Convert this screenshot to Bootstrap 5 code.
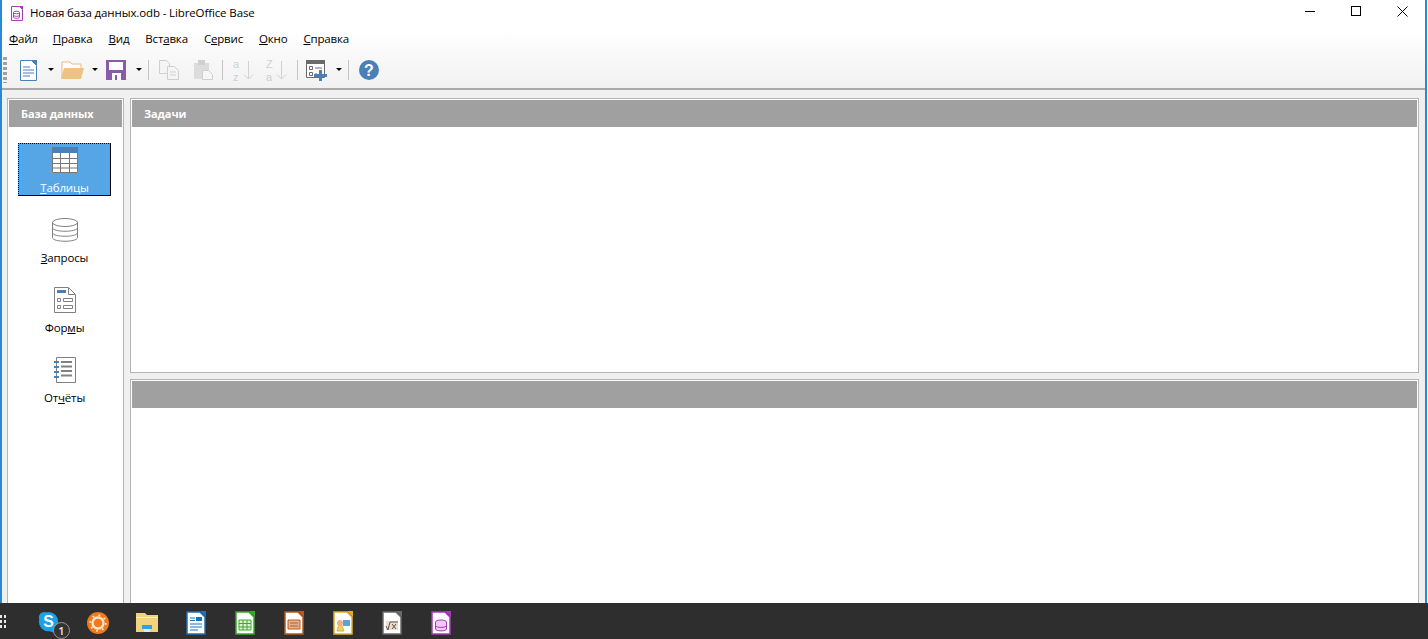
<!DOCTYPE html>
<html lang="ru">
<head>
  <meta charset="UTF-8" />
  <meta name="viewport" content="width=device-width, initial-scale=1" />
  <title>Новая база данных.odb - LibreOffice Base</title>
  <link href="https://cdn.jsdelivr.net/npm/bootstrap@5.3.0/dist/css/bootstrap.min.css" rel="stylesheet" />
  <style>
    html, body { height: 100%; }
    body {
      background: #fff;
      font-family: "Open Sans", "Noto Sans", "Liberation Sans", sans-serif;
      font-size: 12px;
      color: #000;
      overflow: hidden;
    }
    svg { display: block; flex: none; }
    .lo-window { height: 639px; background: #f0f0f0; border-left: 2px solid #2b88d8; border-right: 2px solid #2b88d8; margin-right: 1px; }
    .lo-head { background: linear-gradient(#fff 0, #fff 30px, #f1f1f1 88px); border-bottom: 2px solid #a9a9a9; height: 90px; flex: none; }
    .lo-title { height: 26px; padding-left: 7px; }
    .lo-title-text { font-size: 11.5px; letter-spacing: -.12px; margin-left: 5px; }
    .lo-controls { margin-bottom: 4px; }
    .lo-ctl { width: 46px; height: 22px; }
    .lo-menu { height: 26px; padding-left: 7px; }
    .lo-menu-item { margin-right: 16px; font-size: 11.5px; letter-spacing: -.17px; }
    .lo-menu-item:first-child { margin-right: 15px; }
    .lo-tools { height: 36px; padding-left: 1px; }
    .lo-grip { width: 4px; height: 26px; margin-right: 13px; background: repeating-linear-gradient(#a0a0a0 0 3px, transparent 3px 5px); }
    .lo-sep { width: 1px; height: 20px; background: #c4c4c4; }
    .lo-drop { width: 0; height: 0; border-left: 3px solid transparent; border-right: 3px solid transparent; border-top: 3px solid #000; margin-bottom: 2px; }
    .lo-g6 { margin-left: 6px; }
    .lo-g7 { margin-left: 7px; }
    .lo-g8 { margin-left: 8px; }
    .lo-g9 { margin-left: 9px; }
    .lo-g10 { margin-left: 10px; }
    .lo-g11 { margin-left: 11px; }
    .lo-g12 { margin-left: 12px; }
    .lo-g15 { margin-left: 15px; }
    .lo-body { flex: 1; min-height: 0; padding: 8px 6px 0 5px; gap: 6px; }
    .lo-side { width: 117px; flex: none; border: 1px solid #b4b4b4; border-bottom: 0; padding: 1px; background: #fff; }
    .lo-main { flex: 1; min-width: 0; gap: 6px; }
    .lo-panel { border: 1px solid #b4b4b4; background: #fff; padding: 1px; }
    .lo-panel-top { height: 275px; flex: none; }
    .lo-panel-bottom { flex: 1; border-bottom: 0; }
    .lo-cap { height: 27px; flex: none; background: #a0a0a0; color: #fff; font-weight: 700; font-size: 11px; letter-spacing: -.08px; padding: 2px 0 0 12px; }
    .lo-items { padding: 16px 11px 0 9px; gap: 17px; }
    .lo-entry { height: 53px; padding-top: 4px; font-size: 11.5px; letter-spacing: -.15px; }
    .lo-entry span { line-height: 16px; margin-top: 7px; }
    .lo-entry-on { background: #56a5e5; color: #fff; outline: 1px dotted #000; outline-offset: -1px; box-shadow: inset -1px -1px 0 #000; }
    .lo-task { height: 36px; flex: none; background: #2e2e2e; margin: 0 -3px 0 -2px; padding: 3px 0 0 24px; position: relative; }
    .lo-start { position: absolute; left: 0; top: 12px; }
    .lo-slot { width: 49px; }
    .lo-badge { position: absolute; left: 53px; top: 19px; width: 17px; height: 17px; border: 1px solid #9a9a9a; border-radius: 50%; background: #333; color: #e4e4e4; font-size: 11px; font-weight: 600; line-height: 15px; text-align: center; }
  </style>
</head>
<body>
  <div class="lo-window d-flex flex-column">
    <div class="lo-head d-flex flex-column">
      <div class="lo-title d-flex align-items-center justify-content-between">
        <div class="d-flex align-items-center">
          <svg width="16" height="17" viewBox="0 0 16 17"><path d="M2.500 1.500h8l3 3v11h-11z" fill="#fff" stroke="#a33db0"/><path d="M10 1h4v4z" fill="#a33db0"/><ellipse cx="7.500" cy="7.500" rx="3" ry="1.300" fill="none" stroke="#a33db0"/><path d="M4.500 7.500V12c0 1.800 6 1.800 6 0V7.500M4.500 10c0 1.800 6 1.800 6 0" fill="none" stroke="#a33db0"/></svg>
          <span class="lo-title-text">Новая база данных.odb - LibreOffice Base</span>
        </div>
        <div class="lo-controls d-flex">
          <div class="lo-ctl d-flex align-items-center justify-content-center"><svg width="11" height="11" viewBox="0 0 11 11"><path d="M0 5.500h10" stroke="#000"/></svg></div>
          <div class="lo-ctl d-flex align-items-center justify-content-center"><svg width="11" height="11" viewBox="0 0 11 11"><rect x=".5" y=".5" width="9" height="9" fill="none" stroke="#000"/></svg></div>
          <div class="lo-ctl d-flex align-items-center justify-content-center"><svg width="11" height="11" viewBox="0 0 11 11"><path d="M.5.500l10 10M10.500.500l-10 10" stroke="#000"/></svg></div>
        </div>
      </div>
      <div class="lo-menu d-flex align-items-center">
        <span class="lo-menu-item"><u>Ф</u>айл</span>
        <span class="lo-menu-item"><u>П</u>равка</span>
        <span class="lo-menu-item"><u>В</u>ид</span>
        <span class="lo-menu-item">Вст<u>а</u>вка</span>
        <span class="lo-menu-item">С<u>е</u>рвис</span>
        <span class="lo-menu-item"><u>О</u>кно</span>
        <span class="lo-menu-item"><u>С</u>правка</span>
      </div>
      <div class="lo-tools d-flex align-items-center">
        <div class="lo-grip"></div>
        <svg width="17" height="21" viewBox="0 0 17 21"><path d="M.500.500h11l5 5v15H.500z" fill="#fff" stroke="#4a80b8"/><path d="M11 0h6v6z" fill="#4a80b8"/><path d="M3 7h7M3 10h11M3 13h11M3 16h7" stroke="#4a80b8"/></svg>
        <div class="lo-drop lo-g11"></div>
        <svg class="lo-g7" width="23" height="18" viewBox="0 0 23 18"><path d="M1 17V1h8l2 2h9v4" fill="#fff" stroke="#e9bb7c"/><path d="M0 18L3 7h20l-3 11z" fill="#edc285"/></svg>
        <div class="lo-drop lo-g8"></div>
        <svg class="lo-g8" width="20" height="20" viewBox="0 0 20 20"><path d="M0 0h20v20H0z" fill="#8a5ba8"/><path d="M3 2h14v8H3z" fill="#fff"/><path d="M6 13h9v7H6z" fill="#fff"/><path d="M9 15h2v5H9z" fill="#8a5ba8"/></svg>
        <div class="lo-drop lo-g10"></div>
        <div class="lo-sep lo-g6"></div>
        <svg class="lo-g10" width="20" height="20" viewBox="0 0 20 20"><path d="M.500.500h7l3 3v10H.500z" fill="#f4f4f4" stroke="#cfcfcf"/><path d="M8.500 6.500h7l4 4v9h-11z" fill="#f4f4f4" stroke="#cfcfcf"/><path d="M11 12h6M11 15h6" stroke="#cfcfcf"/></svg>
        <svg class="lo-g15" width="19" height="20" viewBox="0 0 19 20"><path d="M0 3h15v16H0z" fill="#dcdcdc"/><path d="M4 0h7v5H4z" fill="#cfcfcf"/><path d="M8.500 10.500h6l4 4v5h-10z" fill="#f6f6f6" stroke="#cfcfcf"/></svg>
        <div class="lo-sep lo-g9"></div>
        <svg class="lo-g10" width="21" height="26" viewBox="0 0 21 26"><text x="0" y="11" font-family="Liberation Sans, sans-serif" font-size="11" fill="#cfcfcf">a</text><text x="0" y="23.500" font-family="Liberation Sans, sans-serif" font-size="11" fill="#cfcfcf">z</text><path d="M15.500 4v18M11 17.500l4.500 4.500 4.500-4.500" fill="none" stroke="#d2d2d2"/></svg>
        <svg class="lo-g12" width="21" height="26" viewBox="0 0 21 26"><text x="0" y="11" font-family="Liberation Sans, sans-serif" font-size="11" fill="#cfcfcf">Z</text><text x="0" y="23.500" font-family="Liberation Sans, sans-serif" font-size="11" fill="#cfcfcf">a</text><path d="M15.500 4v18M11 17.500l4.500 4.500 4.500-4.500" fill="none" stroke="#d2d2d2"/></svg>
        <div class="lo-sep lo-g10"></div>
        <svg class="lo-g8" width="21" height="21" viewBox="0 0 21 21"><path d="M.500.500h18v17H.500z" fill="#fff" stroke="#6a6a6a"/><path d="M0 0h19v4H0z" fill="#6a6a6a"/><path d="M3.500 6.500h3v3h-3zM3.500 12.500h3v3h-3zM9 8h7M9 14h2" fill="none" stroke="#6a6a6a"/><path d="M13 10h3v4h5v3h-5v4h-3v-4H8v-3h5z" fill="#4a80b8"/></svg>
        <div class="lo-drop lo-g9"></div>
        <div class="lo-sep lo-g6"></div>
        <svg class="lo-g10" width="20" height="20" viewBox="0 0 20 20"><circle cx="10" cy="10" r="10" fill="#4a80b8"/><text x="10" y="15.500" text-anchor="middle" font-family="Liberation Sans, sans-serif" font-size="16" font-weight="700" fill="#fff">?</text></svg>
      </div>
    </div>
    <div class="lo-body d-flex">
      <div class="lo-side d-flex flex-column">
        <div class="lo-cap d-flex align-items-center">База данных</div>
        <div class="lo-items d-flex flex-column">
          <div class="lo-entry lo-entry-on d-flex flex-column align-items-center">
            <svg width="26" height="26" viewBox="0 0 26 26"><path d="M0 0h26v26H0z" fill="#fff"/><path d="M0 0h26v6H0z" fill="#4a80b8"/><path d="M.500.500h25v25H.500zM0 11.500h26M0 16.500h26M0 21h26M8.500 6v20M17.500 6v20" fill="none" stroke="#777"/></svg>
            <span><u>Т</u>аблицы</span>
          </div>
          <div class="lo-entry d-flex flex-column align-items-center">
            <svg width="26" height="26" viewBox="0 0 26 26"><ellipse cx="13" cy="5.500" rx="12.500" ry="4" fill="#fff" stroke="#808080"/><path d="M.500 5.500v15c0 5 25 5 25 0v-15M.500 10.500c0 5 25 5 25 0M.500 15.500c0 5 25 5 25 0" fill="none" stroke="#808080"/></svg>
            <span><u>З</u>апросы</span>
          </div>
          <div class="lo-entry d-flex flex-column align-items-center">
            <svg width="22" height="26" viewBox="0 0 22 26"><path d="M.500.500h14l7 7v18H.500z" fill="#fff" stroke="#808080"/><path d="M14.500 1v6.500H21" fill="none" stroke="#808080"/><path d="M3 3h9v3H3z" fill="#4a80b8"/><path d="M3.500 11.500h3v3h-3zM3.500 18.500h3v3h-3zM9.500 11.500h9v3h-9zM9.500 18.500h9v3h-9z" fill="none" stroke="#808080"/></svg>
            <span>Фор<u>м</u>ы</span>
          </div>
          <div class="lo-entry d-flex flex-column align-items-center">
            <svg width="22" height="26" viewBox="0 0 22 26"><path d="M2.500.500h19v25h-19z" fill="#fff" stroke="#808080"/><path d="M7 5h11M7 9.500h11M7 14h11M7 18.500h11" stroke="#808080" stroke-width="2"/><path d="M0 5h5M0 10h5M0 15h5M0 20h5" stroke="#4a80b8" stroke-width="2"/></svg>
            <span>От<u>ч</u>ёты</span>
          </div>
        </div>
      </div>
      <div class="lo-main d-flex flex-column">
        <div class="lo-panel lo-panel-top d-flex flex-column"><div class="lo-cap d-flex align-items-center">Задачи</div></div>
        <div class="lo-panel lo-panel-bottom d-flex flex-column"><div class="lo-cap"></div></div>
      </div>
    </div>
    <div class="lo-task d-flex align-items-center">
      <svg class="lo-start" width="6" height="14" viewBox="0 0 6 14"><path d="M0 0h2v3H0zM4 0h2v3H4zM0 5h2v3H0zM4 5h2v3H4zM0 10h2v3H0zM4 10h2v3H4z" fill="#e8e8e8"/></svg>
      <div class="lo-slot d-flex justify-content-center">
        <svg width="21" height="21" viewBox="0 0 24 24"><circle cx="12" cy="11" r="11" fill="#1ba1e8"/><circle cx="7" cy="6" r="6" fill="#1ba1e8"/><circle cx="17" cy="17" r="6" fill="#1ba1e8"/><text x="12" y="17.500" text-anchor="middle" font-family="Liberation Sans, sans-serif" font-size="18" font-weight="700" fill="#fff">S</text></svg>
      </div>
      <div class="lo-badge">1</div>
      <div class="lo-slot d-flex justify-content-center">
        <svg width="22" height="22" viewBox="0 0 24 24"><circle cx="12" cy="12" r="12" fill="#ee7a1c"/><circle cx="12" cy="12" r="6" fill="none" stroke="#fbe3c8" stroke-width="2.500"/><circle cx="12" cy="12" r="8.500" fill="none" stroke="#fbe3c8" stroke-width="2" stroke-dasharray="2 4.700"/></svg>
      </div>
      <div class="lo-slot d-flex justify-content-center">
        <svg width="22" height="19" viewBox="0 0 22 19"><path d="M0 0h9l2 2h11v17H0z" fill="#f2d27a"/><path d="M0 4h22v1H0z" fill="#fff3c4"/><path d="M6 12h10v4H6z" fill="#2fa3e8"/><path d="M8 16h6v3H8z" fill="#d7ecf8"/></svg>
      </div>
      <div class="lo-slot d-flex justify-content-center">
        <svg width="20" height="24" viewBox="0 0 20 24"><path d="M1 1h13l5 5v17H1z" fill="#fff" stroke="#1b72b8" stroke-width="1.500"/><path d="M14 0h6v6z" fill="#1b72b8"/><path d="M10 6h6v4h-6z" fill="#1b72b8"/><path d="M4 7h5M4 9.500h5M4 13h12M4 16h12M4 19h8" stroke="#1b72b8" stroke-width="1.200"/></svg>
      </div>
      <div class="lo-slot d-flex justify-content-center">
        <svg width="20" height="24" viewBox="0 0 20 24"><path d="M1 1h13l5 5v17H1z" fill="#fff" stroke="#3da82c" stroke-width="1.500"/><path d="M14 0h6v6z" fill="#3da82c"/><path d="M4 9h12v10H4z" fill="#dff0d8" stroke="#3da82c"/><path d="M4 12.500h12M4 16h12M8 9v10M12 9v10" stroke="#3da82c"/></svg>
      </div>
      <div class="lo-slot d-flex justify-content-center">
        <svg width="20" height="24" viewBox="0 0 20 24"><path d="M1 1h13l5 5v17H1z" fill="#fff" stroke="#b85a1f" stroke-width="1.500"/><path d="M14 0h6v6z" fill="#b85a1f"/><path d="M4 9h12v9H4z" fill="#e8b08c" stroke="#b85a1f"/><path d="M6 12h8M6 15h8" stroke="#b85a1f"/></svg>
      </div>
      <div class="lo-slot d-flex justify-content-center">
        <svg width="20" height="24" viewBox="0 0 20 24"><path d="M1 1h13l5 5v17H1z" fill="#fff" stroke="#e0ae2c" stroke-width="1.500"/><path d="M14 0h6v6z" fill="#e0ae2c"/><path d="M4 20l3-10 4 10z" fill="#efcf80" stroke="#e0ae2c"/><circle cx="7" cy="12" r="3" fill="#eab090"/><path d="M10 9h7v6h-7z" fill="#5ba3d8"/></svg>
      </div>
      <div class="lo-slot d-flex justify-content-center">
        <svg width="20" height="24" viewBox="0 0 20 24"><path d="M1 1h13l5 5v17H1z" fill="#fff" stroke="#6a6a6a" stroke-width="1.500"/><path d="M14 0h6v6z" fill="#6a6a6a"/><path d="M4 10h12v9H4z" fill="#f0dccb"/><path d="M4 15l2 4 2-8h8M10 13l4 5M14 13l-4 5" fill="none" stroke="#555"/></svg>
      </div>
      <div class="lo-slot d-flex justify-content-center">
        <svg width="20" height="24" viewBox="0 0 20 24"><path d="M1 1h13l5 5v17H1z" fill="#fff" stroke="#a83cb8" stroke-width="1.500"/><path d="M14 0h6v6z" fill="#a83cb8"/><ellipse cx="10" cy="11" rx="5.500" ry="2" fill="#eeccf2" stroke="#a83cb8"/><path d="M4.500 11v7c0 2.500 11 2.500 11 0v-7M4.500 14.500c0 2.500 11 2.500 11 0" fill="#eeccf2" stroke="#a83cb8"/></svg>
      </div>
    </div>
  </div>
  <script src="https://cdn.jsdelivr.net/npm/bootstrap@5.3.0/dist/js/bootstrap.bundle.min.js"></script>
</body>
</html>
